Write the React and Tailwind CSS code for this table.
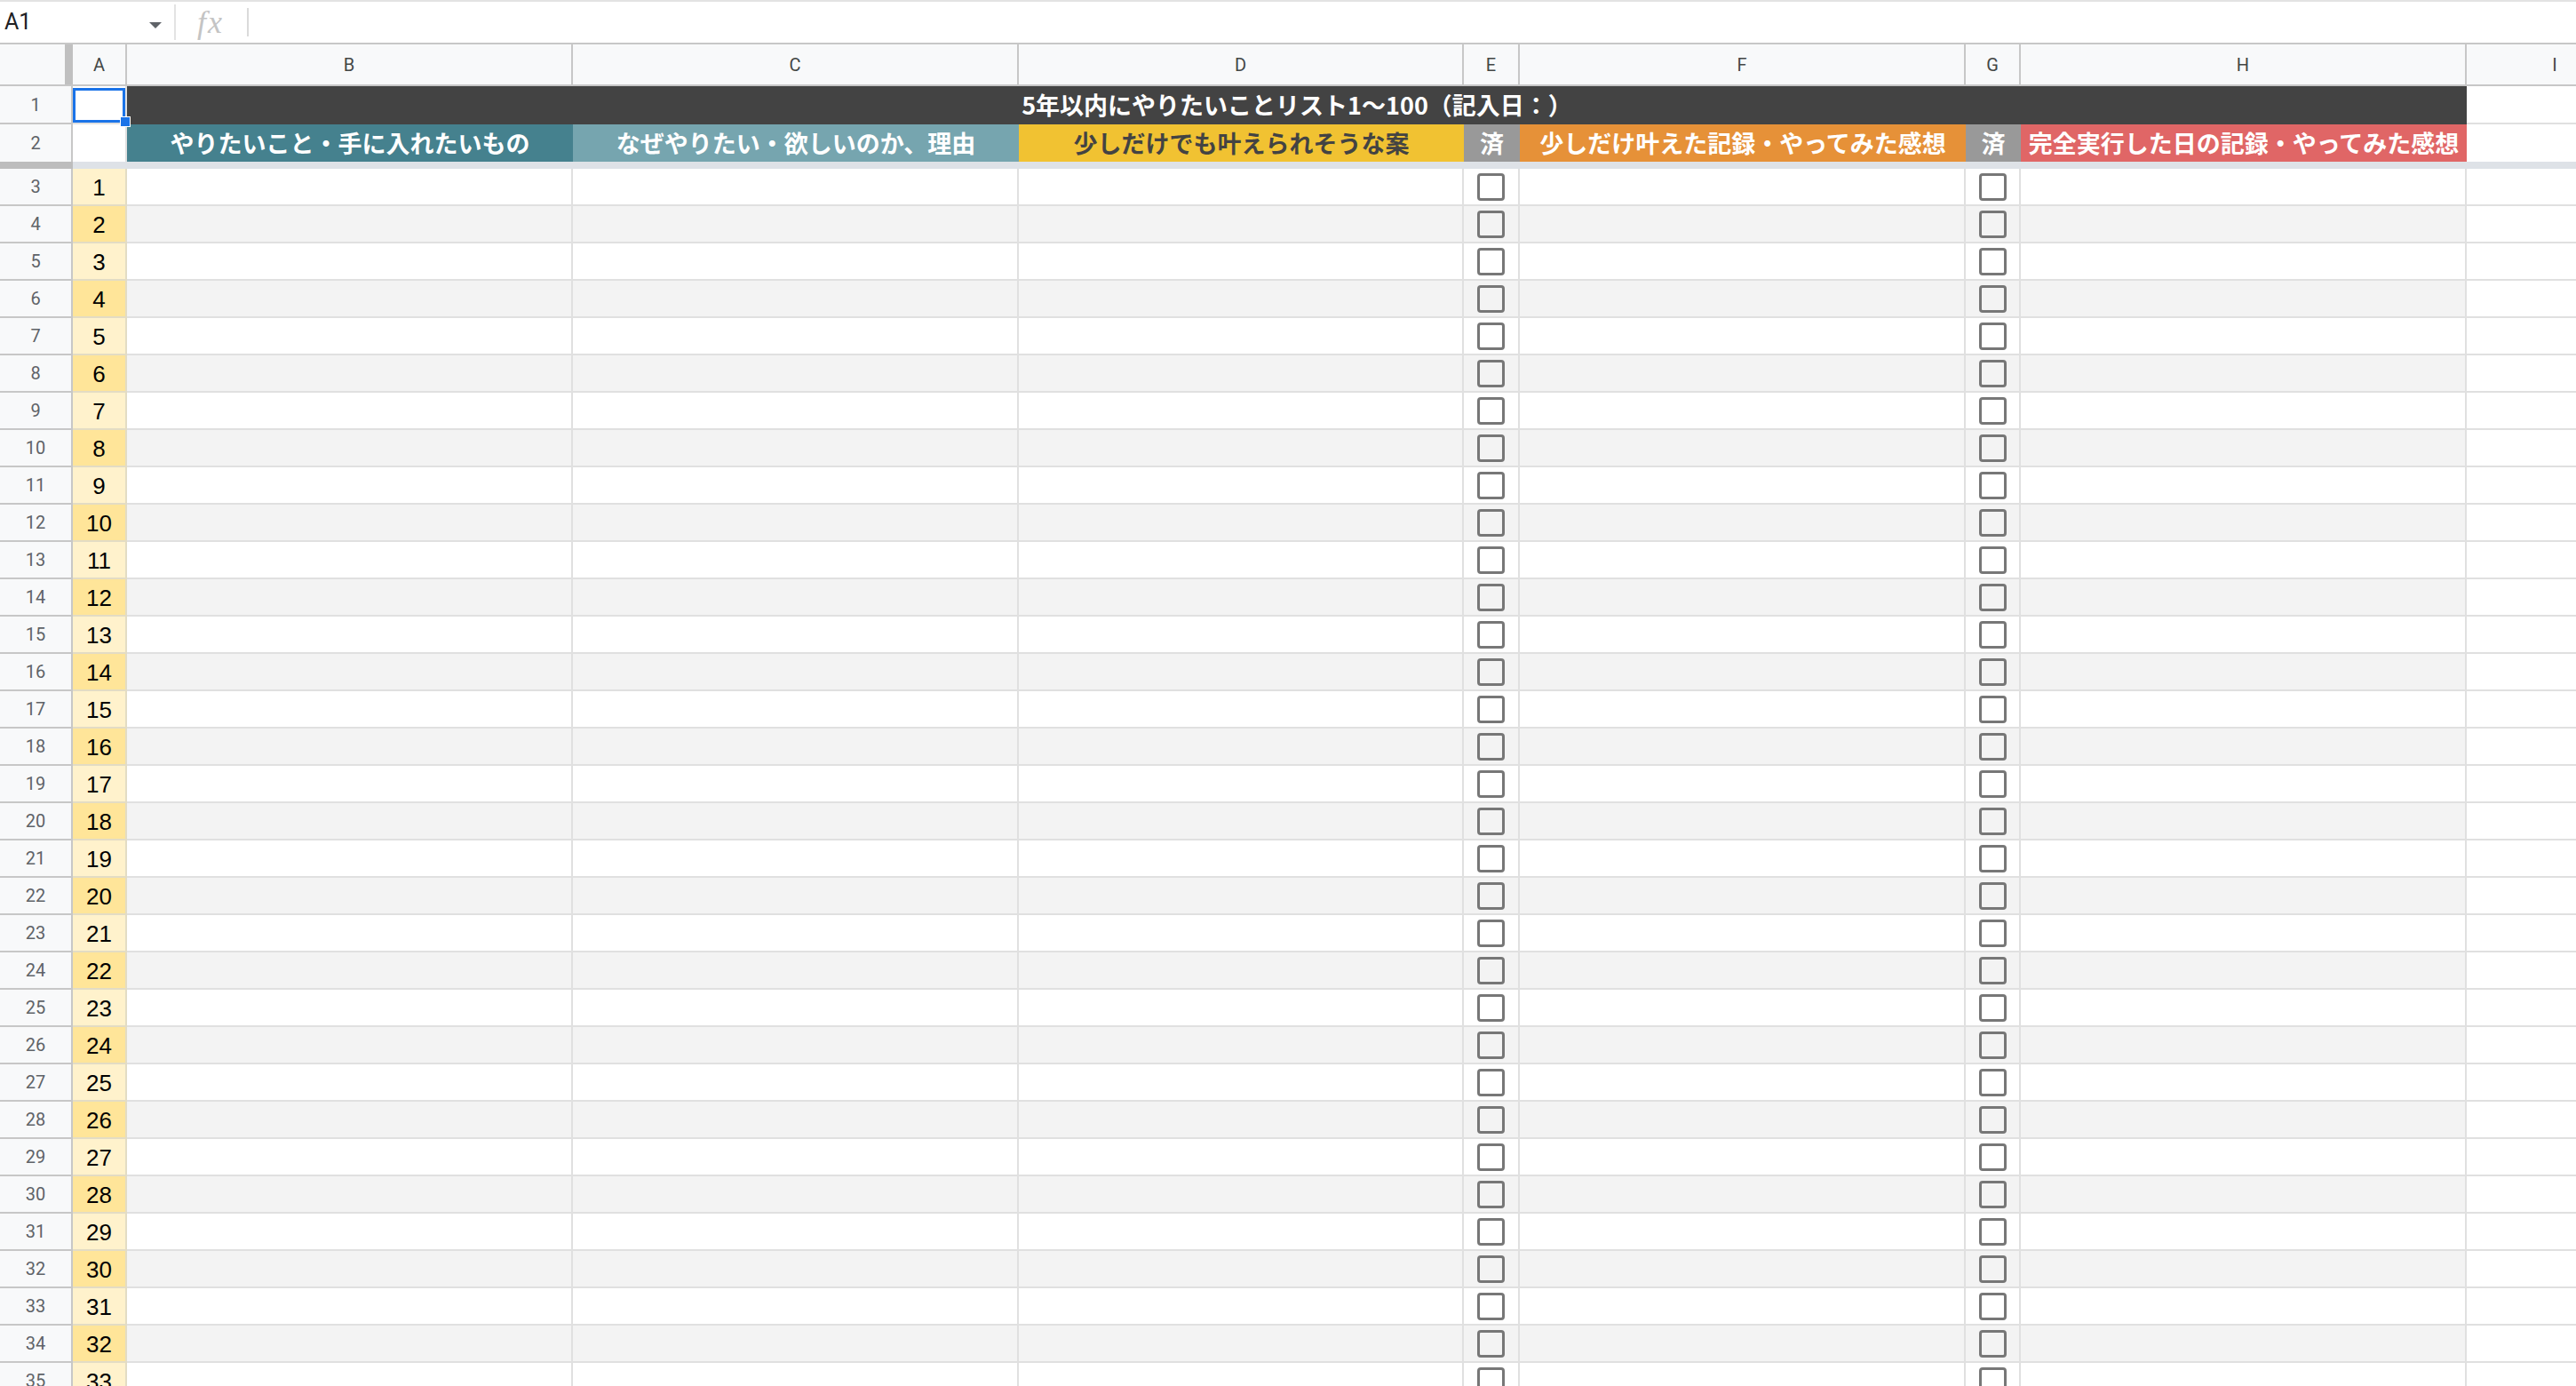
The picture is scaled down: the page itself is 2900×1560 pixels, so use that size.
import React from 'react';

const headers = [
  { text: 'やりたいこと・手に入れたいもの', w: 'w-[502px]', cls: 'bg-[#45818e] text-white' },
  { text: 'なぜやりたい・欲しいのか、理由', w: 'w-[502px]', cls: 'bg-[#76a5af] text-white' },
  { text: '少しだけでも叶えられそうな案', w: 'w-[501px]', cls: 'bg-[#f1c232] text-[#434343]' },
  { text: '済', w: 'w-[63px]', cls: 'bg-[#999999] text-white' },
  { text: '少しだけ叶えた記録・やってみた感想', w: 'w-[502px]', cls: 'bg-[#e69138] text-white' },
  { text: '済', w: 'w-[62px]', cls: 'bg-[#999999] text-white' },
  { text: '完全実行した日の記録・やってみた感想', w: 'w-[502px]', cls: 'bg-[#e06666] text-white' },
];

const letters = [
  { id: 'A', w: 'w-[61px]' },
  { id: 'B', w: 'w-[502px]' },
  { id: 'C', w: 'w-[502px]' },
  { id: 'D', w: 'w-[501px]' },
  { id: 'E', w: 'w-[63px]' },
  { id: 'F', w: 'w-[502px]' },
  { id: 'G', w: 'w-[62px]' },
  { id: 'H', w: 'w-[502px]' },
  { id: 'I', w: 'w-[200px]' },
];

function Checkbox() {
  return <div className="w-[31px] h-[31px] rounded-[4px] border-[3px] border-[#777777]" />;
}

function RowHead({ children }) {
  return (
    <div className="w-[82px] shrink-0 flex items-center justify-center bg-[#f8f9fa] border-r-2 border-b-2 border-[#c7c7c7] text-[20px] text-[#5f6368] font-['Roboto',sans-serif]">
      {children}
    </div>
  );
}

function BodyRow({ n }) {
  const odd = n % 2 === 1;
  const band = odd ? 'bg-[#f3f3f3]' : 'bg-white';
  const cell = `h-full shrink-0 border-r-2 border-b-2 border-[#e0e0e0] ${band}`;
  return (
    <div className="flex h-[42px] shrink-0">
      <RowHead>{n + 3}</RowHead>
      <div
        className={`w-[61px] shrink-0 flex items-center justify-center pt-[3px] border-r-2 border-b-2 border-[#e3dcc4] text-[26px] text-black font-['Liberation_Sans',sans-serif] ${
          odd ? 'bg-[#ffe599]' : 'bg-[#fff2cc]'
        }`}
      >
        {n + 1}
      </div>
      <div className={`w-[502px] ${cell}`} />
      <div className={`w-[502px] ${cell}`} />
      <div className={`w-[501px] ${cell}`} />
      <div className={`w-[63px] flex items-center justify-center ${cell}`}>
        <Checkbox />
      </div>
      <div className={`w-[502px] ${cell}`} />
      <div className={`w-[62px] flex items-center justify-center ${cell}`}>
        <Checkbox />
      </div>
      <div className={`w-[502px] ${cell}`} />
      <div className="w-[200px] h-full shrink-0 bg-white border-r-2 border-b-2 border-[#e0e0e0]" />
    </div>
  );
}

export default function App() {
  const rows = Array.from({ length: 34 }, (_, i) => i);

  return (
    <div className="w-[2900px] h-[1560px] overflow-hidden bg-white flex flex-col">
      {/* formula bar */}
      <div className="h-[50px] shrink-0 flex items-center border-t-2 border-b-2 border-t-[#e3e3e3] border-b-[#c7c7c7] bg-white">
        <div className="w-[196px] h-full shrink-0 flex items-center justify-between pl-[5px] pr-[14px]">
          <span className="text-[25px] text-[#202124] font-['Roboto',sans-serif]">A1</span>
          <span className="mt-[6px] w-0 h-0 border-l-[7px] border-r-[7px] border-t-[7px] border-l-transparent border-r-transparent border-t-[#5f6368]" />
        </div>
        <div className="w-[2px] h-[40px] bg-[#e3e3e3]" />
        <span className="ml-[24px] italic text-[36px] leading-none tracking-[2px] text-[#c4c4c4] font-['Liberation_Serif',serif]">fx</span>
        <div className="ml-[26px] w-[2px] h-[32px] bg-[#dadada]" />
      </div>

      {/* column letters */}
      <div className="h-[47px] shrink-0 flex border-b-2 border-[#c7c7c7] bg-[#f8f9fa] font-['Roboto',sans-serif] text-[20px] text-[#444746]">
        <div className="w-[73px] shrink-0" />
        <div className="w-[9px] shrink-0 bg-[#c0c0c0]" />
        {letters.map((c) => (
          <div key={c.id} className={`${c.w} shrink-0 flex items-center justify-center border-r-2 border-[#c7c7c7]`}>
            {c.id}
          </div>
        ))}
      </div>

      {/* row 1 */}
      <div className="flex h-[43px] shrink-0">
        <RowHead>1</RowHead>
        <div className="relative z-10 w-[61px] shrink-0 bg-white border-r-2 border-b-2 border-[#e0e0e0]">
          <div className="absolute left-0 right-0 top-[2px] bottom-0 border-[3px] border-[#1a73e8]" />
          <div className="absolute right-[-6px] bottom-[-5px] w-[12px] h-[12px] bg-[#1a73e8] border border-white" />
        </div>
        <div className="w-[2634px] shrink-0 flex items-center justify-center bg-[#434343] text-white text-[27px] font-bold font-['Noto_Sans_CJK_JP',sans-serif]">
          5年以内にやりたいことリスト1〜100（記入日：）
        </div>
        <div className="w-[200px] shrink-0 bg-white border-b-2 border-[#e0e0e0]" />
      </div>

      {/* row 2 */}
      <div className="flex h-[42px] shrink-0">
        <div className="w-[82px] shrink-0 flex items-center justify-center bg-[#f8f9fa] border-r-2 border-[#c7c7c7] text-[20px] text-[#5f6368] font-['Roboto',sans-serif]">
          2
        </div>
        <div className="w-[61px] shrink-0 bg-white border-r-2 border-[#e0e0e0]" />
        {headers.map((h, i) => (
          <div
            key={i}
            className={`${h.w} ${h.cls} shrink-0 flex items-center justify-center text-[27px] font-bold font-['Noto_Sans_CJK_JP',sans-serif] whitespace-nowrap`}
          >
            {h.text}
          </div>
        ))}
        <div className="w-[200px] shrink-0 bg-white" />
      </div>

      {/* frozen divider */}
      <div className="flex h-[8px] shrink-0">
        <div className="w-[82px] shrink-0 bg-[#bdbdbd]" />
        <div className="flex-1 bg-[#dee2e7]" />
      </div>

      {rows.map((n) => (
        <BodyRow key={n} n={n} />
      ))}
    </div>
  );
}
